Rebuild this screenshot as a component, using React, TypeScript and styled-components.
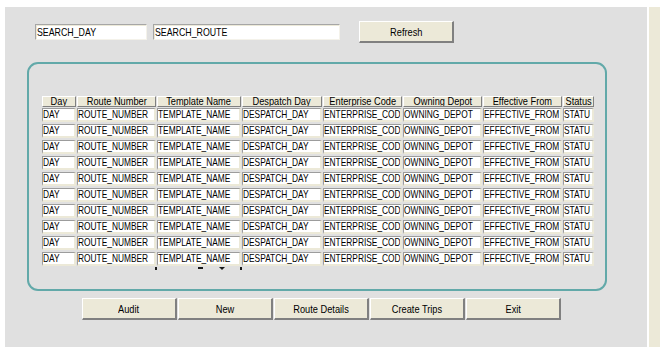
import React from 'react';
import styled, { createGlobalStyle } from 'styled-components';

const GlobalStyle = createGlobalStyle`
  html, body {
    margin: 0;
    padding: 0;
    background: #ffffff;
  }
  body {
    font-family: "Liberation Sans", Arial, sans-serif;
    font-size: 11px;
    color: #000;
  }
`;

const Page = styled.div`
  display: flex;
  width: 660px;
  height: 361px;
  padding: 7px 0 0 5px;
  box-sizing: border-box;
  background: #ffffff;
`;

const Workspace = styled.div`
  width: 642px;
  height: 340px;
  background: #e0e0e0;
  display: flex;
  flex-direction: column;
  padding: 14px 0 0 30px;
  box-sizing: border-box;
`;

const SideStrip = styled.div`
  width: 11px;
  height: 340px;
  margin-left: 2px;
  background: #ece9d8;
`;

// narrow MS Sans Serif look: Arial metrics squeezed horizontally
const Label = styled.span<{ $center?: boolean; $scale?: number }>`
  display: inline-block;
  white-space: nowrap;
  transform: scaleX(${(p) => p.$scale ?? 0.84});
  transform-origin: ${(p) => (p.$center ? 'center' : 'left')} center;
`;

const SearchRow = styled.div`
  display: flex;
  align-items: center;
  height: 22px;
`;

const SearchInput = styled.div<{ $width: number; $gap?: number }>`
  width: ${(p) => p.$width}px;
  height: 16px;
  margin-right: ${(p) => p.$gap ?? 0}px;
  box-sizing: border-box;
  background: #ffffff;
  border-style: solid;
  border-width: 1px;
  border-color: #a6a6a6 #f4f2ea #f4f2ea #a6a6a6;
  box-shadow: inset 1px 1px 0 #ece9d8;
  line-height: 14px;
  padding-left: 1px;
  white-space: nowrap;
  overflow: hidden;
`;

const Button = styled.div<{ $width: number }>`
  width: ${(p) => p.$width}px;
  height: 22px;
  box-sizing: border-box;
  background: #ece9d8;
  border-style: solid;
  border-width: 1px 2px 2px 1px;
  border-color: #ffffff #808080 #808080 #ffffff;
  display: flex;
  align-items: center;
  justify-content: center;
  white-space: nowrap;
  overflow: hidden;
`;

const Panel = styled.div`
  margin: 19px 0 0 -8px;
  width: 580px;
  height: 229px;
  box-sizing: border-box;
  border: 2px solid #62a9a9;
  border-radius: 11px;
  padding: 32px 0 0 13px;
`;

const Table = styled.div`
  display: flex;
  flex-direction: column;
`;

const HeaderRow = styled.div`
  display: flex;
  gap: 1px;
  height: 11px;
  margin-bottom: 1px;
`;

const HeaderCell = styled.div<{ $width: number }>`
  width: ${(p) => p.$width}px;
  box-sizing: border-box;
  background: #ece9d8;
  border-style: solid;
  border-width: 1px;
  border-color: #ffffff #808080 #808080 #ffffff;
  display: flex;
  align-items: center;
  justify-content: center;
  line-height: 9px;
  overflow: hidden;
`;

const DataRow = styled.div`
  display: flex;
  gap: 1px;
  height: 14px;
  margin-bottom: 2px;
`;

const DataCell = styled.div<{ $width: number }>`
  width: ${(p) => p.$width}px;
  box-sizing: border-box;
  background: #ffffff;
  border-style: solid;
  border-width: 1px 2px 2px 1px;
  border-color: #9c9c9c #ece9d8 #ece9d8 #9c9c9c;
  line-height: 11px;
  overflow: hidden;
`;

const MarkRow = styled.div`
  display: flex;
  align-items: flex-start;
  height: 4px;
  margin-top: -1px;
`;

const Mark = styled.div<{ $offset: number; $w: number; $h: number }>`
  margin-left: ${(p) => p.$offset}px;
  width: ${(p) => p.$w}px;
  height: ${(p) => p.$h}px;
  background: #1a1a1a;
`;

const Caret = styled.div<{ $offset: number }>`
  margin-left: ${(p) => p.$offset}px;
  width: 0;
  height: 0;
  border-left: 3px solid transparent;
  border-right: 3px solid transparent;
  border-top: 3px solid #1a1a1a;
`;

const ButtonBar = styled.div`
  display: flex;
  gap: 1px;
  margin: 7px 0 0 47px;
`;

const columns = [
  { title: 'Day', value: 'DAY', width: 34 },
  { title: 'Route Number', value: 'ROUTE_NUMBER', width: 79 },
  { title: 'Template Name', value: 'TEMPLATE_NAME', width: 84 },
  { title: 'Despatch Day', value: 'DESPATCH_DAY', width: 80 },
  { title: 'Enterprise Code', value: 'ENTERPRISE_COD', width: 79 },
  { title: 'Owning Depot', value: 'OWNING_DEPOT', width: 79 },
  { title: 'Effective From', value: 'EFFECTIVE_FROM', width: 79 },
  { title: 'Status', value: 'STATU', width: 31 },
];

const actions = ['Audit', 'New', 'Route Details', 'Create Trips', 'Exit'];

const rows = Array.from({ length: 10 }, (_, i) => i);

const App = () => {
  return (
    <>
      <GlobalStyle />
      <Page>
        <Workspace>
          <SearchRow>
            <SearchInput $width={112} $gap={6}>
              <Label $scale={0.8}>SEARCH_DAY</Label>
            </SearchInput>
            <SearchInput $width={187} $gap={19}>
              <Label $scale={0.8}>SEARCH_ROUTE</Label>
            </SearchInput>
            <Button $width={95}>
              <Label $center>Refresh</Label>
            </Button>
          </SearchRow>

          <Panel>
            <Table>
              <HeaderRow>
                {columns.map((c) => (
                  <HeaderCell key={c.title} $width={c.width}>
                    <Label $center>{c.title}</Label>
                  </HeaderCell>
                ))}
              </HeaderRow>
              {rows.map((r) => (
                <DataRow key={r}>
                  {columns.map((c) => (
                    <DataCell key={c.title} $width={c.width}>
                      <Label $scale={0.76}>{c.value}</Label>
                    </DataCell>
                  ))}
                </DataRow>
              ))}
              <MarkRow>
                <Mark $offset={113} $w={2} $h={3} />
                <Mark $offset={41} $w={5} $h={2} />
                <Caret $offset={16} />
                <Mark $offset={15} $w={2} $h={3} />
              </MarkRow>
            </Table>
          </Panel>

          <ButtonBar>
            {actions.map((a) => (
              <Button key={a} $width={95}>
                <Label $center>{a}</Label>
              </Button>
            ))}
          </ButtonBar>
        </Workspace>
        <SideStrip />
      </Page>
    </>
  );
};

export default App;
